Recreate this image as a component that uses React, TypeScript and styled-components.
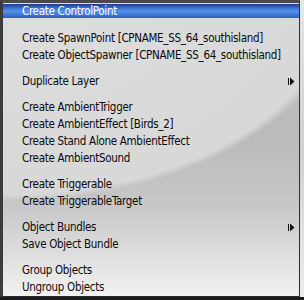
import React from "react"
import styled, { createGlobalStyle } from "styled-components"

const GlobalStyle = createGlobalStyle`
  html, body {
    margin: 0;
    padding: 0;
    background: #1b1b1b;
  }
  body {
    width: 304px;
    height: 300px;
    overflow: hidden;
  }
`

const Page = styled.div`
  display: flex;
  align-items: flex-start;
  width: 304px;
  height: 300px;
`

const Menu = styled.div`
  box-sizing: border-box;
  width: 300px;
  height: 297px;
  padding-top: 1px;
  border-top: 3px solid #4a4a4a;
  border-left: 3px solid #3c3c3c;
  border-right: 1px solid #2e2e2e;
  border-bottom: 1px solid #2a2a2a;
  background:
    radial-gradient(338px 198px at 0 0, #dedede 0%, #d8d8d8 97%, rgba(216, 216, 216, 0) 100%),
    linear-gradient(180deg, #c4c4c4 0%, #bababa 45%, #c8c8c8 70%, #f2f2f2 100%);
  font-family: "DejaVu Sans Condensed", "DejaVu Sans", sans-serif;
  font-size: 11.5px;
  letter-spacing: -0.3px;
  color: #0a0a0a;
`

const RightStrip = styled.div`
  width: 4px;
  height: 297px;
  background: linear-gradient(180deg, #e6e6e6, #cfcfcf 50%, #ececec);
`

const Item = styled.div<{ $active?: boolean }>`
  position: relative;
  height: 17px;
  padding-left: 19px;
  white-space: nowrap;
  color: ${p => (p.$active ? "#fff" : "#0a0a0a")};
  background: ${p =>
    p.$active
      ? "linear-gradient(180deg, #1d3d86 0px, #3a6fd0 4px, #5a92e8 7px, #3d73d4 11px, #2f5fbe 14px) top left / 100% 14px no-repeat"
      : "none"};
  line-height: ${p => (p.$active ? "15px" : "17px")};
`

const Separator = styled.div`
  height: 9px;
`

const Arrow = styled.svg`
  position: absolute;
  right: 4px;
  top: 4px;
`

const SubArrow = () => (
  <Arrow width="7" height="9" viewBox="0 0 7 9">
    <rect x="0" y="1" width="1" height="7" fill="#111" />
    <path d="M2 0.5 L6.5 4.5 L2 8.5 Z" fill="#111" />
  </Arrow>
)

const groups: { label: string; sub?: boolean; active?: boolean }[][] = [
  [{ label: "Create ControlPoint", active: true }],
  [
    { label: "Create SpawnPoint [CPNAME_SS_64_southisland]" },
    { label: "Create ObjectSpawner [CPNAME_SS_64_southisland]" },
  ],
  [{ label: "Duplicate Layer", sub: true }],
  [
    { label: "Create AmbientTrigger" },
    { label: "Create AmbientEffect [Birds_2]" },
    { label: "Create Stand Alone AmbientEffect" },
    { label: "Create AmbientSound" },
  ],
  [{ label: "Create Triggerable" }, { label: "Create TriggerableTarget" }],
  [{ label: "Object Bundles", sub: true }, { label: "Save Object Bundle" }],
  [{ label: "Group Objects" }, { label: "Ungroup Objects" }],
]

export default function App() {
  return (
    <Page>
      <GlobalStyle />
      <Menu>
        {groups.map((g, gi) => (
          <React.Fragment key={gi}>
            {gi > 0 && <Separator />}
            {g.map(it => (
              <Item key={it.label} $active={it.active}>
                {it.label}
                {it.sub && <SubArrow />}
              </Item>
            ))}
          </React.Fragment>
        ))}
      </Menu>
      <RightStrip />
    </Page>
  )
}
